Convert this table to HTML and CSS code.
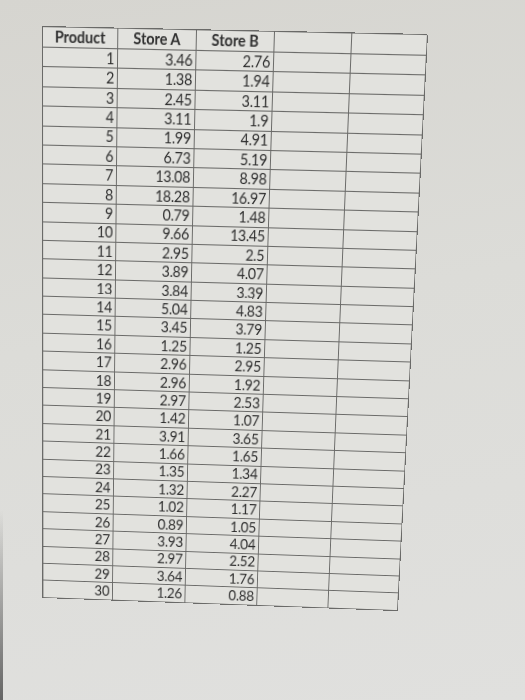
FILE: index.html
```html
<!DOCTYPE html>
<html lang="en">
<head>
<meta charset="utf-8">
<title>Product prices</title>
<link rel="stylesheet" href="styles.css">
</head>
<body>
<div class="page">
  <div class="sheet" id="sheet">
    <div class="cell head">Product</div>
    <div class="cell head">Store A</div>
    <div class="cell head">Store B</div>
    <div class="cell"></div>
    <div class="cell"></div>
  </div>
</div>
<script src="app.js"></script>
</body>
</html>
```
FILE: app.js
```js
const data = [
  [3.46, 2.76], [1.38, 1.94], [2.45, 3.11], [3.11, 1.9], [1.99, 4.91],
  [6.73, 5.19], [13.08, 8.98], [18.28, 16.97], [0.79, 1.48], [9.66, 13.45],
  [2.95, 2.5], [3.89, 4.07], [3.84, 3.39], [5.04, 4.83], [3.45, 3.79],
  [1.25, 1.25], [2.96, 2.95], [2.96, 1.92], [2.97, 2.53], [1.42, 1.07],
  [3.91, 3.65], [1.66, 1.65], [1.35, 1.34], [1.32, 2.27], [1.02, 1.17],
  [0.89, 1.05], [3.93, 4.04], [2.97, 2.52], [3.64, 1.76], [1.26, 0.88]
];
const sheet = document.getElementById('sheet');
data.forEach((row, i) => {
  const vals = [String(i + 1), String(row[0]), String(row[1]), '', ''];
  vals.forEach(v => {
    const c = document.createElement('div');
    c.className = 'cell num';
    c.textContent = v;
    sheet.appendChild(c);
  });
});
```
FILE: styles.css
```css
html, body {
  margin: 0;
  padding: 0;
}
body {
  width: 525px;
  height: 700px;
  overflow: hidden;
  background:
    linear-gradient(180deg, rgba(70,70,70,0) 0, rgba(70,70,70,0.8) 100%) 0 510px / 3px 190px no-repeat,
    linear-gradient(170deg, #d6d5d0 0%, #dcdcd8 45%, #e0e0de 100%);
  font-family: Lato, "Open Sans", sans-serif;
  color: #2f2f2f;
}
.page {
  padding: 26px 0 0 42px;
}
.sheet {
  display: grid;
  grid-template-columns: 76px 79px 78px 77px 75px;
  grid-template-rows: 19px repeat(30, 18.4px);
  width: 385px;
  box-sizing: border-box;
  border-left: 1px solid #6a6a68;
  border-top: 1px solid #6a6a68;
  background: #e2e2de;
  transform-origin: 0 0;
  transform: matrix3d(0.989416, 0.020559, 0, -0.00002749, 0.00094855, 1.085140, 0, 0.00014885, 0, 0, 1, 0, 0, 0, 0, 1);
}
.cell {
  border-right: 1px solid #6a6a68;
  border-bottom: 1px solid #6a6a68;
  display: flex;
  align-items: flex-end;
  justify-content: flex-end;
  padding: 0 3px 1px 0;
  font-size: 14.5px;
  letter-spacing: -0.3px;
  line-height: 1;
  overflow: hidden;
  white-space: nowrap;
}
.head {
  justify-content: center;
  align-items: center;
  padding: 0;
  font-weight: 700;
  font-size: 14.5px;
  letter-spacing: 0;
}
```
